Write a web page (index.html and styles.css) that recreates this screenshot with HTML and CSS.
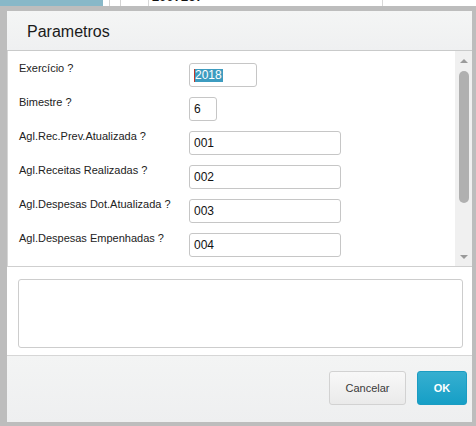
FILE: index.html
```html
<!DOCTYPE html>
<html>
<head>
<meta charset="utf-8">
<link rel="stylesheet" href="styles.css">
</head>
<body>
<div class="behind">
  <div class="behind-blue"></div>
  <div class="behind-col c1"></div>
  <div class="behind-col c2"></div>
  <div class="behind-box"><span class="behind-text">2007267</span></div>
</div>
<div class="dialog">
  <div class="header"><span class="title">Parametros</span></div>
  <div class="panel">
    <div class="form">
      <div class="row"><span class="label">Exercício ?</span><div class="field w-68"><span class="sel">2018</span></div></div>
      <div class="row"><span class="label">Bimestre ?</span><div class="field w-28">6</div></div>
      <div class="row"><span class="label">Agl.Rec.Prev.Atualizada ?</span><div class="field w-152">001</div></div>
      <div class="row"><span class="label">Agl.Receitas Realizadas ?</span><div class="field w-152">002</div></div>
      <div class="row"><span class="label">Agl.Despesas Dot.Atualizada ?</span><div class="field w-152">003</div></div>
      <div class="row"><span class="label">Agl.Despesas Empenhadas ?</span><div class="field w-152">004</div></div>
    </div>
    <div class="scrollbar">
      <div class="arrow up"></div>
      <div class="track"><div class="thumb"></div></div>
      <div class="arrow down"></div>
    </div>
  </div>
  <div class="notes"><div class="textarea"></div></div>
  <div class="footer">
    <button class="btn btn-cancel">Cancelar</button>
    <button class="btn btn-ok">OK</button>
  </div>
</div>
</body>
</html>
```
FILE: styles.css
```css
* { box-sizing: border-box; }
html, body { margin: 0; padding: 0; }
body {
  width: 476px;
  height: 426px;
  overflow: hidden;
  background: #ffffff;
  font-family: "Liberation Sans", Arial, sans-serif;
}
.behind {
  height: 6px;
  display: flex;
  overflow: hidden;
  background: #ffffff;
}
.behind-blue { width: 103px; background: #88b8c8; }
.behind-col { width: 1px; background: #d4d4d4; }
.c1 { margin-left: 6px; }
.c2 { margin-left: 10px; }
.behind-box {
  margin-left: 27px;
  width: 235px;
  border-left: 1px solid #d8d8d8;
  border-right: 1px solid #d8d8d8;
  overflow: hidden;
}
.behind-text {
  display: block;
  margin-top: -10px;
  padding-left: 3px;
  font-size: 13px;
  font-weight: bold;
  line-height: 13px;
  color: #111;
}
.dialog {
  height: 420px;
  border-style: solid;
  border-color: #bdbdbd;
  border-width: 5px 4px 4px 7px;
  display: flex;
  flex-direction: column;
  background: #ffffff;
}
.header {
  height: 40px;
  flex: none;
  padding: 12px 0 0 20px;
  border-bottom: 1px solid #c9caca;
  background: linear-gradient(#f4f5f5, #eff0f1);
}
.title {
  font-size: 16px;
  line-height: 18px;
  color: #1a1a1a;
}
.panel {
  height: 216px;
  flex: none;
  display: flex;
  border-left: 1px solid #d6d6d6;
  border-bottom: 1px solid #cfcfcf;
  overflow: hidden;
}
.form {
  flex: 1;
  padding: 12px 0 0 11px;
  display: flex;
  flex-direction: column;
  gap: 10px;
}
.row {
  display: flex;
  align-items: flex-start;
  height: 24px;
}
.label {
  width: 170px;
  flex: none;
  font-size: 11px;
  line-height: 13px;
  margin-top: -1px;
  color: #222;
}
.field {
  height: 24px;
  border: 1px solid #c6c6c6;
  border-radius: 3px;
  background: #fff;
  padding-left: 4px;
  font-size: 12px;
  line-height: 22px;
  color: #111;
  display: flex;
  align-items: center;
}
.w-68 { width: 68px; }
.w-28 { width: 28px; }
.w-152 { width: 152px; }
.sel {
  background: #3d9cc0;
  color: #fff;
  line-height: 13px;
  border-left: 1px solid #c0392b;
  padding-right: 1px;
}
.scrollbar {
  width: 17px;
  flex: none;
  background: #f0f0f0;
  display: flex;
  flex-direction: column;
  align-items: center;
  padding: 8px 0 7px;
}
.arrow {
  width: 0;
  height: 0;
  border-left: 4px solid transparent;
  border-right: 4px solid transparent;
}
.arrow.up { border-bottom: 4px solid #9a9a9a; }
.arrow.down { border-top: 4px solid #9a9a9a; }
.track {
  flex: 1;
  width: 10px;
  padding: 8px 0 0;
}
.thumb {
  width: 10px;
  height: 132px;
  border-radius: 5px;
  background: #b0b0b0;
}
.notes {
  height: 88px;
  flex: none;
  padding: 12px 9px 7px 11px;
}
.textarea {
  height: 69px;
  border: 1px solid #cdcdcd;
  border-radius: 3px;
  background: #fff;
}
.footer {
  flex: 1;
  border-top: 1px solid #d6d6d6;
  background: linear-gradient(#f3f4f4, #eeeff0);
  display: flex;
  justify-content: flex-end;
  align-items: flex-start;
  gap: 11px;
  padding: 15px 5px 0 0;
}
.btn {
  height: 34px;
  border-radius: 3px;
  font-family: "Liberation Sans", Arial, sans-serif;
  cursor: pointer;
  padding: 0;
}
.btn-cancel {
  width: 77px;
  border: 1px solid #d2d2d2;
  background: linear-gradient(#f8f8f8, #eaeaea);
  color: #3a3a3a;
  font-size: 11px;
}
.btn-ok {
  width: 50px;
  border: 1px solid #1b9cc2;
  background: linear-gradient(#36afd0, #169fc6);
  color: #fff;
  font-size: 11px;
  font-weight: bold;
}
```
